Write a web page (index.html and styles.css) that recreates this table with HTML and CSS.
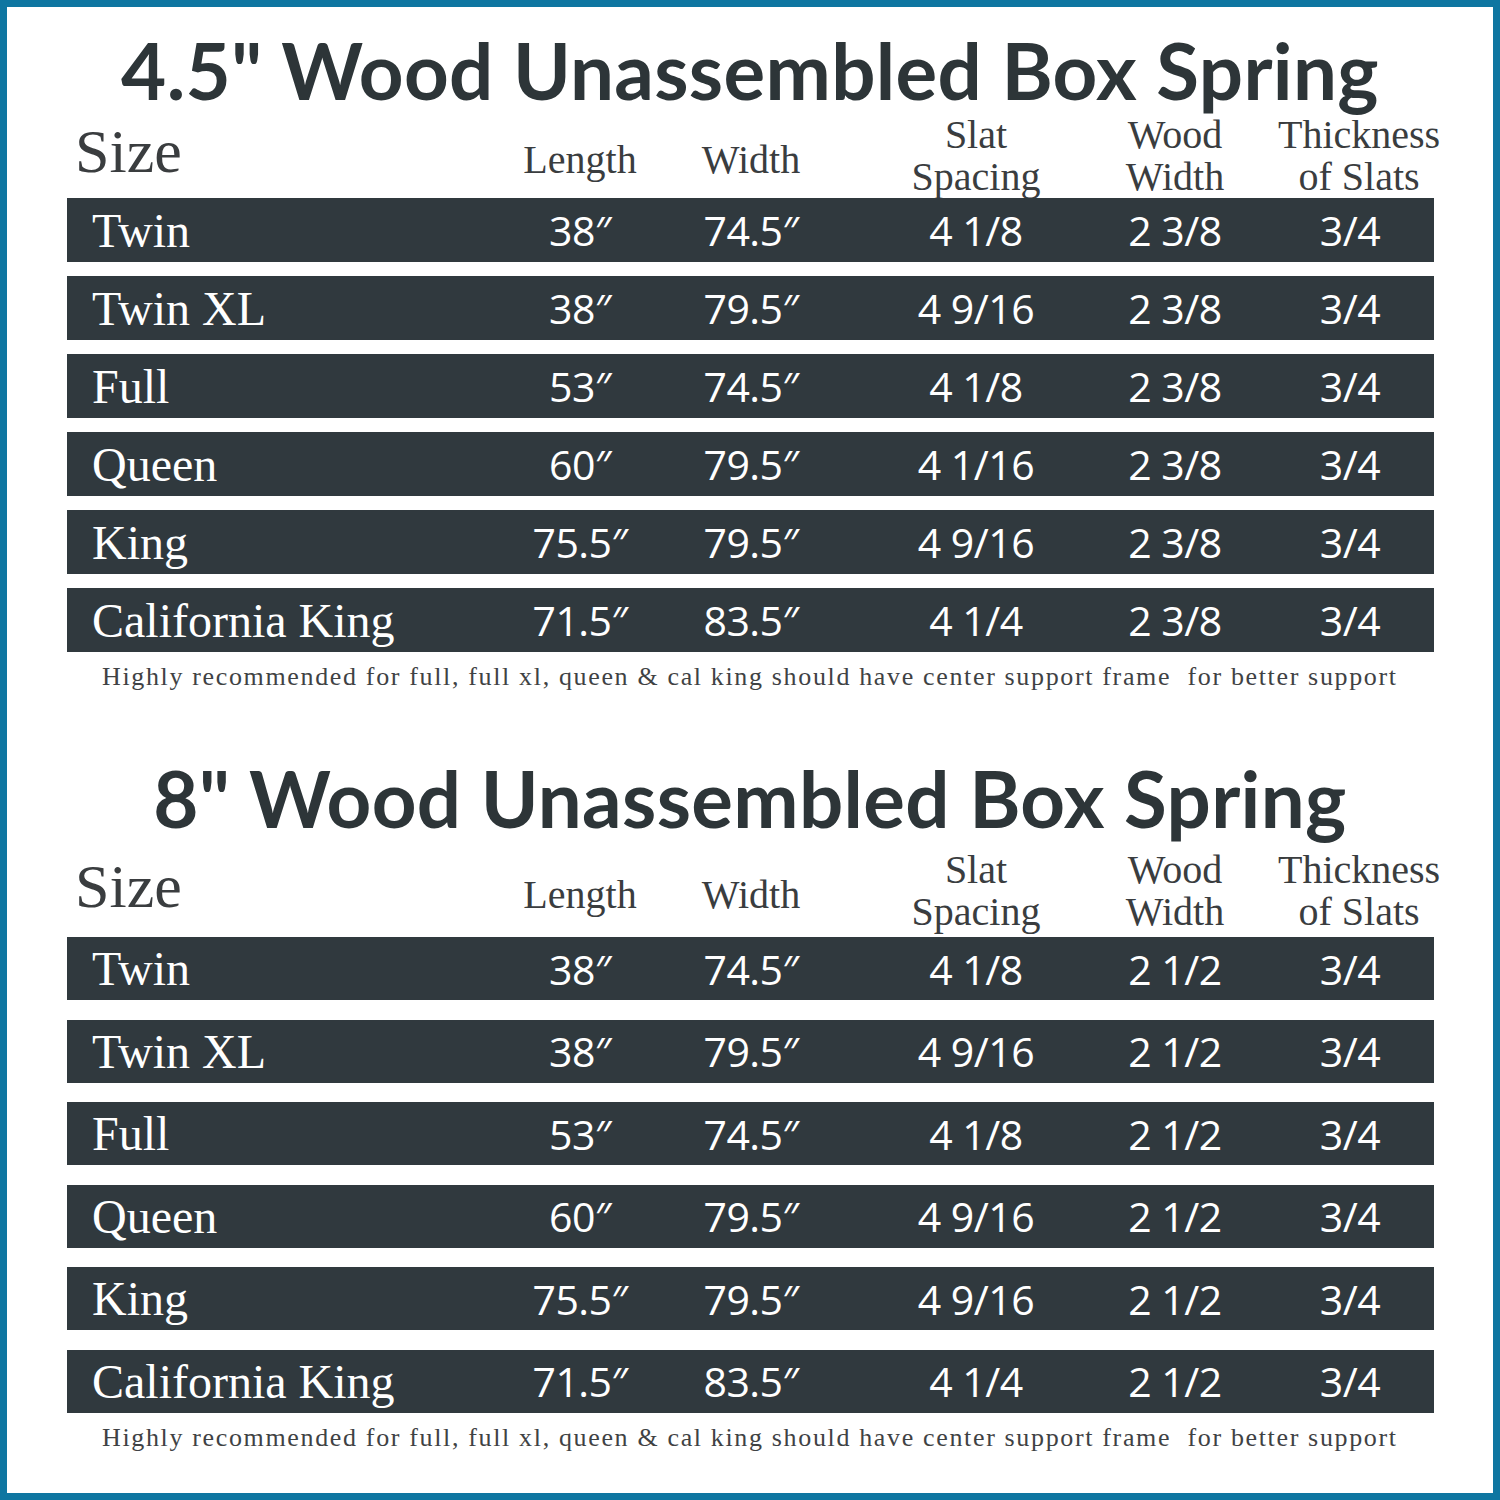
FILE: index.html
```html
<!DOCTYPE html>
<html lang="en">
<head>
<meta charset="utf-8">
<title>Wood Unassembled Box Spring</title>
<link rel="stylesheet" href="styles.css">
</head>
<body>
<div class="frame">
  <section class="sec sec-a">
    <h1 class="title">4.5" Wood Unassembled Box Spring</h1>
    <div class="table">
      <div class="head">
        <div class="h h-size">Size</div>
        <div class="h h-one">Length</div>
        <div class="h h-one">Width</div>
        <div class="h h-two">Slat<br>Spacing</div>
        <div class="h h-two">Wood<br>Width</div>
        <div class="h h-two h-last">Thickness<br>of Slats</div>
      </div>
      <div class="rows">
        <div class="row"><div class="name">Twin</div><div class="v">38″</div><div class="v">74.5″</div><div class="v">4 1/8</div><div class="v">2 3/8</div><div class="v v-last">3/4</div></div>
        <div class="row"><div class="name">Twin XL</div><div class="v">38″</div><div class="v">79.5″</div><div class="v">4 9/16</div><div class="v">2 3/8</div><div class="v v-last">3/4</div></div>
        <div class="row"><div class="name">Full</div><div class="v">53″</div><div class="v">74.5″</div><div class="v">4 1/8</div><div class="v">2 3/8</div><div class="v v-last">3/4</div></div>
        <div class="row"><div class="name">Queen</div><div class="v">60″</div><div class="v">79.5″</div><div class="v">4 1/16</div><div class="v">2 3/8</div><div class="v v-last">3/4</div></div>
        <div class="row"><div class="name">King</div><div class="v">75.5″</div><div class="v">79.5″</div><div class="v">4 9/16</div><div class="v">2 3/8</div><div class="v v-last">3/4</div></div>
        <div class="row"><div class="name">California King</div><div class="v">71.5″</div><div class="v">83.5″</div><div class="v">4 1/4</div><div class="v">2 3/8</div><div class="v v-last">3/4</div></div>
      </div>
      <p class="note">Highly recommended for full, full xl, queen &amp; cal king should have center support frame&nbsp; for better support</p>
    </div>
  </section>

  <section class="sec sec-b">
    <h1 class="title">8" Wood Unassembled Box Spring</h1>
    <div class="table">
      <div class="head">
        <div class="h h-size">Size</div>
        <div class="h h-one">Length</div>
        <div class="h h-one">Width</div>
        <div class="h h-two">Slat<br>Spacing</div>
        <div class="h h-two">Wood<br>Width</div>
        <div class="h h-two h-last">Thickness<br>of Slats</div>
      </div>
      <div class="rows">
        <div class="row"><div class="name">Twin</div><div class="v">38″</div><div class="v">74.5″</div><div class="v">4 1/8</div><div class="v">2 1/2</div><div class="v v-last">3/4</div></div>
        <div class="row"><div class="name">Twin XL</div><div class="v">38″</div><div class="v">79.5″</div><div class="v">4 9/16</div><div class="v">2 1/2</div><div class="v v-last">3/4</div></div>
        <div class="row"><div class="name">Full</div><div class="v">53″</div><div class="v">74.5″</div><div class="v">4 1/8</div><div class="v">2 1/2</div><div class="v v-last">3/4</div></div>
        <div class="row"><div class="name">Queen</div><div class="v">60″</div><div class="v">79.5″</div><div class="v">4 9/16</div><div class="v">2 1/2</div><div class="v v-last">3/4</div></div>
        <div class="row"><div class="name">King</div><div class="v">75.5″</div><div class="v">79.5″</div><div class="v">4 9/16</div><div class="v">2 1/2</div><div class="v v-last">3/4</div></div>
        <div class="row"><div class="name">California King</div><div class="v">71.5″</div><div class="v">83.5″</div><div class="v">4 1/4</div><div class="v">2 1/2</div><div class="v v-last">3/4</div></div>
      </div>
      <p class="note">Highly recommended for full, full xl, queen &amp; cal king should have center support frame&nbsp; for better support</p>
    </div>
  </section>
</div>
</body>
</html>
```

FILE: styles.css
```css
* { box-sizing: border-box; }

html, body {
  margin: 0;
  padding: 0;
  background: #ffffff;
}

.frame {
  width: 1500px;
  height: 1500px;
  border: 7px solid #0e76a1;
  background: #ffffff;
  overflow: hidden;
}

.sec-a { padding-top: 23px; }
.sec-b { padding-top: 66px; }

.title {
  margin: 0;
  font-family: "Lato", "Open Sans", sans-serif;
  font-weight: 700;
  font-size: 78px;
  line-height: 80px;
  letter-spacing: 0.35px;
  color: #2d3538;
  text-align: center;
  white-space: nowrap;
}

.table {
  padding: 0 59px 0 60px;
  --cols: 428px 170px 172px 278px 120px 1fr;
}

.sec-a .head { margin-top: 4px; }
.sec-b .head { margin-top: 11px; padding-bottom: 4px; }

.head {
  display: grid;
  grid-template-columns: var(--cols);
  height: 84px;
  box-sizing: content-box;
  font-family: "Liberation Serif", "Times New Roman", serif;
  color: #3a3d3f;
}

.h {
  display: flex;
  justify-content: center;
  text-align: center;
  white-space: nowrap;
  font-size: 40px;
  line-height: 42px;
}

.h-size {
  justify-content: flex-start;
  padding-left: 8px;
  font-size: 62px;
  line-height: 62px;
  align-self: end;
  margin-bottom: 16px;
}

.h-one {
  align-self: end;
  margin-bottom: 17px;
}

.h-two { align-self: end; }

.h-last { padding-left: 43px; }

.rows {
  display: flex;
  flex-direction: column;
}

.sec-a .rows { gap: 14px; }
.sec-a .row { height: 64px; }
.sec-b .rows { gap: 19.5px; }
.sec-b .row { height: 63px; }

.row {
  display: grid;
  grid-template-columns: var(--cols);
  align-items: center;
  background: #30393e;
  color: #ffffff;
}

.name {
  padding-left: 25px;
  font-family: "Liberation Serif", "Times New Roman", serif;
  font-size: 48px;
  white-space: nowrap;
}

.v {
  display: flex;
  justify-content: center;
  white-space: nowrap;
  font-family: "Open Sans", "Noto Sans", sans-serif;
  font-size: 41px;
  letter-spacing: -0.5px;
}

.v-last { padding-left: 31px; }

.note {
  margin: 10px 0 0 0;
  padding-left: 35px;
  font-family: "Liberation Serif", "Times New Roman", serif;
  font-size: 26px;
  line-height: 30px;
  letter-spacing: 1.65px;
  color: #3f4244;
  white-space: nowrap;
}
```
